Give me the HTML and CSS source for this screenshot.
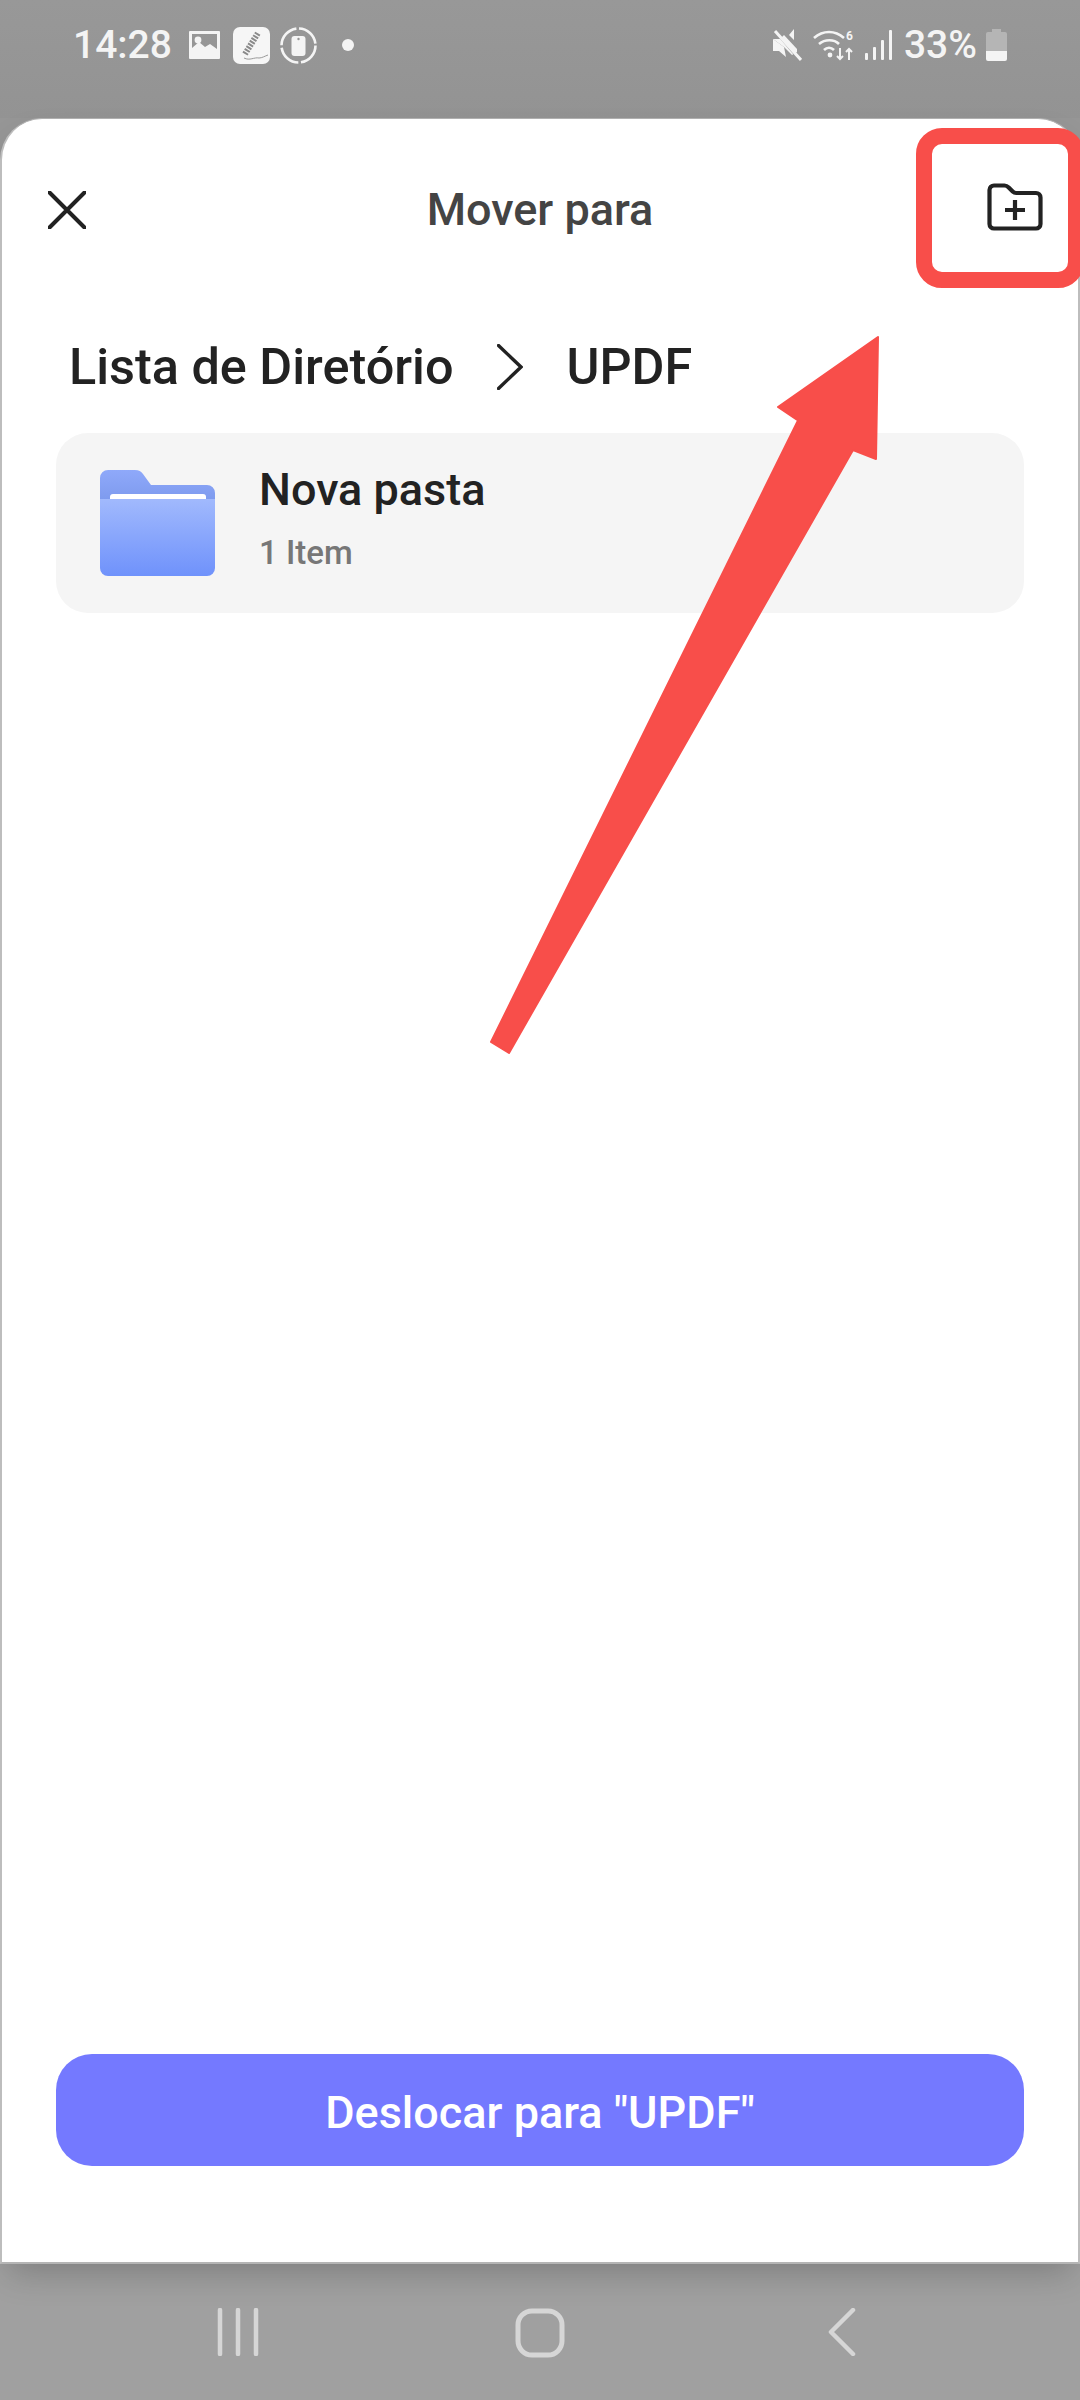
FILE: index.html
```html
<!DOCTYPE html>
<html lang="en">
<head>
    <meta charset="UTF-8">
    <meta name="viewport" content="width=device-width, initial-scale=1.0">
    <title>Mover para</title>
    <link rel="stylesheet" href="styles.css">
</head>
<body>
    <div class="phone">
        <div class="status-bar">
            <div class="status-left">
                <span class="time">14:28</span>
                <svg class="ic-image" width="31" height="28" viewBox="0 0 31 28">
                    <path fill="#f4f4f4" fill-rule="evenodd" d="M1 0h29a1 1 0 0 1 1 1v26a1 1 0 0 1-1 1H1a1 1 0 0 1-1-1V1a1 1 0 0 1 1-1zM3 3v14l7-6 6 5 5-3 7 5V3z"/>
                    <circle cx="9" cy="9" r="3.4" fill="#f4f4f4"/>
                </svg>
                <svg class="ic-pen" width="37" height="37" viewBox="0 0 37 37">
                    <rect width="37" height="37" rx="7" fill="#f6f6f6"/>
                    <path d="M12 27 25 6" stroke="#8a8a8a" stroke-width="6" stroke-dasharray="2 1.2"/>
                    <path d="M11 31c6 3 10-1 15 0 3 0 6-2 9-3" stroke="#9a9a9a" stroke-width="1" fill="none"/>
                </svg>
                <svg class="ic-ring" width="37" height="37" viewBox="0 0 37 37">
                    <circle cx="18.5" cy="18.5" r="17" fill="none" stroke="#f4f4f4" stroke-width="2.6" stroke-dasharray="24 2.7"/>
                    <rect x="11.5" y="9" width="14" height="20" rx="3" fill="#f4f4f4"/>
                    <circle cx="18.5" cy="12" r="1.2" fill="#969696"/>
                </svg>
                <span class="dot"></span>
            </div>
            <div class="status-right">
                <svg width="29" height="32" viewBox="0 0 29 32">
                    <path fill="#f4f4f4" d="M0 10h7l4-4 13 14v3l-5 3-8-8zM21 0v11l-5-5z"/>
                    <path fill="#f4f4f4" d="M0 10v12h6l7 6-2-10z"/>
                    <path stroke="#969696" stroke-width="2" d="M0 0 24 28"/>
                    <path stroke="#f4f4f4" stroke-width="3" d="M2 2 28 31"/>
                </svg>
                <svg width="41" height="32" viewBox="0 0 41 32">
                    <g fill="none" stroke="#f4f4f4" stroke-width="2.6">
                        <path d="M1 9c9-8 21-8 30 0"/>
                        <path d="M6 15c6-5 15-5 20 0"/>
                        <path d="M11 21c3-3 7-3 10 0"/>
                    </g>
                    <circle cx="17" cy="26" r="2.4" fill="#f4f4f4"/>
                    <path stroke="#f4f4f4" stroke-width="2" fill="none" d="M27 19v11m-3-3 3 3 3-3M36 31V20m-3 3 3-3 3 3"/>
                    <text class="wifi-six" x="33" y="11">6</text>
                </svg>
                <svg class="ic-signal" width="28" height="30" viewBox="0 0 28 30">
                    <g fill="#f4f4f4">
                        <rect x="0" y="23" width="3" height="7" rx="1"/>
                        <rect x="8" y="17" width="3" height="13" rx="1"/>
                        <rect x="16" y="10" width="3" height="20" rx="1"/>
                        <rect x="24" y="0" width="3" height="30" rx="1"/>
                    </g>
                </svg>
                <span class="battery-text">33%</span>
                <svg class="ic-battery" width="21" height="32" viewBox="0 0 21 32">
                    <path fill="#b5b5b5" d="M6 0h9v3h4a2 2 0 0 1 2 2v17H0V5a2 2 0 0 1 2-2h4z"/>
                    <path fill="#f4f4f4" d="M0 22h21v8a2 2 0 0 1-2 2H2a2 2 0 0 1-2-2z"/>
                </svg>
            </div>
        </div>

        <div class="sheet">
            <header class="sheet-header">
                <svg class="ic-close" width="38" height="38" viewBox="0 0 38 38">
                    <path d="M1.5 1.5l35 35M36.5 1.5l-35 35" stroke="#222" stroke-width="4" stroke-linecap="round"/>
                </svg>
                <h1>Mover para</h1>
                <svg class="ic-new-folder" width="56" height="48" viewBox="0 0 56 48">
                    <path d="M2.5 7a4.500 4.500 0 0 1 4.500-4.500h10.500c2 0 3 .8 4.200 2l4 4c1 1 2 1.500 3.500 1.500H49a4.500 4.500 0 0 1 4.500 4.500V41a4.500 4.500 0 0 1-4.500 4.500H7A4.500 4.500 0 0 1 2.500 41z" fill="none" stroke="#222" stroke-width="4.200" stroke-linejoin="round"/>
                    <path d="M18 27h20M28 17v20" stroke="#222" stroke-width="4.200"/>
                </svg>
            </header>

            <nav class="breadcrumb">
                <span>Lista de Diretório</span>
                <svg width="26" height="46" viewBox="0 0 26 46">
                    <path d="M1.500 1.500 24 23 1.500 44.500" fill="none" stroke="#222" stroke-width="3.400" stroke-linecap="round"/>
                </svg>
                <span>UPDF</span>
            </nav>

            <div class="folder-row">
                <svg class="ic-folder" width="115" height="106" viewBox="0 0 115 106">
                    <defs>
                        <linearGradient id="folderFront" x1="0" y1="0" x2="0" y2="1">
                            <stop offset="0" stop-color="#a1b9fd"/>
                            <stop offset="1" stop-color="#6f92fb"/>
                        </linearGradient>
                        <linearGradient id="folderBack" x1="0" y1="0" x2="0" y2="1">
                            <stop offset="0" stop-color="#8fa9fa"/>
                            <stop offset="1" stop-color="#7b98ec"/>
                        </linearGradient>
                    </defs>
                    <path fill="url(#folderBack)" d="M0 8a8 8 0 0 1 8-8h27c4 0 6 1.500 8 4l8 11h56a8 8 0 0 1 8 8v12H0z"/>
                    <path fill="#fff" d="M10 27a3 3 0 0 1 3-3h90a3 3 0 0 1 3 3v3H10z"/>
                    <path fill="url(#folderFront)" d="M0 29h10v0h96v0h9v69a8 8 0 0 1-8 8H8a8 8 0 0 1-8-8z"/>
                </svg>
                <div class="folder-info">
                    <div class="folder-name">Nova pasta</div>
                    <div class="folder-count">1 Item</div>
                </div>
            </div>

            <button class="move-btn">Deslocar para "UPDF"</button>
        </div>

        <div class="nav-bar">
            <svg width="42" height="48" viewBox="0 0 42 48">
                <path d="M3 2v44M21 2v44M39 2v44" stroke="#d6d6d6" stroke-width="4.500" stroke-linecap="round"/>
            </svg>
            <svg width="50" height="50" viewBox="0 0 50 50">
                <rect x="3" y="3" width="44" height="44" rx="14" fill="none" stroke="#d6d6d6" stroke-width="5"/>
            </svg>
            <svg width="28" height="48" viewBox="0 0 28 48">
                <path d="M25 2 3 24l22 22" fill="none" stroke="#d6d6d6" stroke-width="4.500" stroke-linecap="round" stroke-linejoin="round"/>
            </svg>
        </div>

        <div class="callout-box"></div>
        <svg class="callout-arrow" width="1080" height="2400" viewBox="0 0 1080 2400">
            <path fill="#f84e4a" stroke="#f84e4a" stroke-width="2" stroke-linejoin="round" d="M878 337 778 407 798 420.500 491 1042 509 1053 853 450 876 459z"/>
        </svg>
    </div>
</body>
</html>
```

FILE: styles.css
```css
html, body {
    margin: 0;
    padding: 0;
}

body {
    font-family: Roboto, 'Noto Sans', sans-serif;
    color: #222;
}

.phone {
    position: relative;
    width: 1080px;
    height: 2400px;
    display: flex;
    flex-direction: column;
    overflow: hidden;
    background: #969696;
}

.status-bar {
    height: 118px;
    flex: none;
    box-sizing: border-box;
    padding: 27px 73px 0 73px;
    display: flex;
    justify-content: space-between;
    align-items: flex-start;
    color: #f4f4f4;
    background: linear-gradient(#989898, #939393);
}

.status-left,
.status-right {
    display: flex;
    align-items: center;
    height: 36px;
}

.time {
    font-size: 39px;
    font-weight: 500;
    margin-right: 17px;
}

.ic-image {
    margin-right: 13px;
}

.ic-pen {
    margin-right: 10px;
}

.dot {
    width: 12px;
    height: 12px;
    margin-left: 25px;
    border-radius: 50%;
    background: #f4f4f4;
}

.status-right {
    gap: 11px;
}

.battery-text {
    font-size: 39px;
    font-weight: 500;
    margin: 0 -2px 0 0;
}

.wifi-six {
    font-family: Roboto, sans-serif;
    font-size: 12px;
    font-weight: 700;
    fill: #f4f4f4;
}

.sheet {
    position: relative;
    z-index: 1;
    flex: 1;
    box-sizing: border-box;
    display: flex;
    flex-direction: column;
    padding: 0 54px 96px 54px;
    background: #fff;
    border-radius: 42px 42px 0 0;
    border: 2px solid #bdbdbd;
    border-top: 1px solid #b0b0b0;
    border-bottom: 2px solid #b5b5b5;
    box-shadow: 0 16px 34px -8px rgba(0, 0, 0, 0.22);
}

.sheet-header {
    height: 181px;
    margin: 0 -16px;
    flex: none;
    display: grid;
    grid-template-columns: 1fr auto 1fr;
    align-items: center;
}

.sheet-header h1 {
    margin: 0;
    font-size: 45px;
    font-weight: 500;
    color: #444;
}

.ic-close {
    margin-left: 8px;
}

.ic-new-folder {
    justify-self: end;
    margin: 0 -3px 5px 0;
}

.breadcrumb {
    height: 133px;
    flex: none;
    display: flex;
    align-items: center;
    padding-left: 13px;
    font-size: 50.4px;
    font-weight: 500;
    color: #222;
}

.breadcrumb svg {
    margin: 0 43px 0 44px;
}

.folder-row {
    height: 180px;
    flex: none;
    box-sizing: border-box;
    display: flex;
    align-items: center;
    gap: 44px;
    padding: 0 0 0 44px;
    background: #f5f5f5;
    border-radius: 32px;
}

.folder-info {
    display: flex;
    flex-direction: column;
    gap: 19px;
    padding-bottom: 10px;
}

.folder-name {
    font-size: 45px;
    font-weight: 500;
    line-height: 50px;
    color: #222;
}

.folder-count {
    font-size: 33px;
    font-weight: 500;
    line-height: 38px;
    color: #777;
}

.move-btn {
    margin-top: auto;
    height: 112px;
    flex: none;
    border: none;
    border-radius: 36px;
    padding: 4px 0 0;
    background: #7479ff;
    color: #fff;
    font-family: inherit;
    font-size: 45px;
    font-weight: 500;
}

.nav-bar {
    height: 136px;
    flex: none;
    box-sizing: border-box;
    display: grid;
    grid-template-columns: repeat(3, 302px);
    justify-content: center;
    justify-items: center;
    padding-top: 44px;
    align-items: start;
    background: #a0a0a0;
}

.callout-box {
    position: absolute;
    z-index: 2;
    left: 916px;
    top: 128px;
    width: 168px;
    height: 160px;
    box-sizing: border-box;
    border: 16px solid #f84e4a;
    border-radius: 26px;
}

.callout-arrow {
    position: absolute;
    z-index: 2;
    left: 0;
    top: 0;
    pointer-events: none;
}
```
